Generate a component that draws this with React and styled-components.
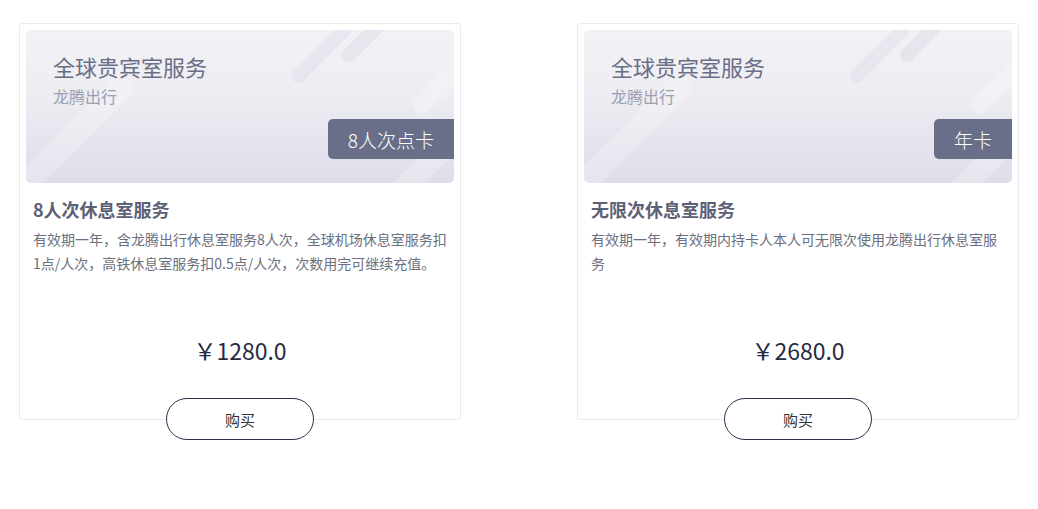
import styled, { createGlobalStyle } from "styled-components";

const GlobalStyle = createGlobalStyle`
  body {
    margin: 0;
    background: #fff;
    font-family: "Noto Sans CJK SC", "Noto Sans", "Liberation Sans", sans-serif;
  }
`

const Page = styled.div`
  display: flex;
  gap: 116px;
  padding: 23px 19px 0;
`

const Column = styled.div`
  display: flex;
  flex-direction: column;
  align-items: center;
  width: 442px;
`

const Card = styled.div`
  box-sizing: border-box;
  width: 100%;
  height: 397px;
  border: 1px solid #ebebef;
  border-radius: 3px;
  padding: 6px 6px 0;
`

const Banner = styled.div`
  position: relative;
  overflow: hidden;
  height: 153px;
  border-radius: 5px;
  background: linear-gradient(180deg, #f2f2f6 0%, #ececf2 45%, #dedde9 100%);
  display: flex;
  flex-direction: column;
  padding: 21px 0 0 27px;
  box-sizing: border-box;
`

const Deco = styled.svg`
  position: absolute;
  inset: 0;
  width: 100%;
  height: 100%;
  pointer-events: none;
`

const BannerTitle = styled.div`
  position: relative;
  font-size: 22px;
  line-height: 30px;
  color: #6a6e86;
`

const BannerSub = styled.div`
  position: relative;
  margin-top: 4px;
  font-size: 16px;
  line-height: 22px;
  color: #9d9eb1;
`

const Tag = styled.div`
  position: absolute;
  right: 0;
  top: 89px;
  height: 40px;
  padding: 0 20px;
  display: flex;
  align-items: center;
  background: #696f88;
  color: #fff;
  font-size: 19px;
  font-weight: 300;
  border-radius: 5px 0 0 5px;
`

const Body = styled.div`
  padding: 0 7px;
`

const Title = styled.div`
  margin-top: 13px;
  font-size: 18px;
  line-height: 26px;
  font-weight: 700;
  color: #5d6176;
`

const Desc = styled.div`
  margin-top: 5px;
  height: 72px;
  font-size: 14px;
  line-height: 24px;
  color: #6c6f7d;
`

const Price = styled.div`
  margin-top: 36px;
  text-align: center;
  font-size: 23px;
  line-height: 30px;
  color: #272c41;
`

const BuyButton = styled.button`
  margin-top: -22px;
  width: 148px;
  height: 42px;
  border: 1px solid #2e3249;
  border-radius: 21px;
  background: #fff;
  color: #333;
  font-family: inherit;
  font-size: 15px;
  cursor: pointer;
`

const Decoration = () => (
  <Deco viewBox="0 0 427 153" preserveAspectRatio="none">
    <line x1="-15" y1="168" x2="95" y2="58" stroke="#ffffff" strokeOpacity="0.22" strokeWidth="24" strokeLinecap="round" />
    <line x1="272" y1="46" x2="318" y2="0" stroke="#dcdce8" strokeOpacity="0.45" strokeWidth="14" strokeLinecap="round" />
    <line x1="322" y1="25" x2="352" y2="-5" stroke="#dcdce8" strokeOpacity="0.55" strokeWidth="14" strokeLinecap="round" />
    <line x1="370" y1="165" x2="445" y2="90" stroke="#ffffff" strokeOpacity="0.25" strokeWidth="22" strokeLinecap="round" />
    <line x1="395" y1="75" x2="440" y2="30" stroke="#ffffff" strokeOpacity="0.25" strokeWidth="18" strokeLinecap="round" />
  </Deco>
)

const cards = [
  {
    tag: "8人次点卡",
    title: "8人次休息室服务",
    desc: "有效期一年，含龙腾出行休息室服务8人次，全球机场休息室服务扣1点/人次，高铁休息室服务扣0.5点/人次，次数用完可继续充值。",
    price: "￥1280.0",
  },
  {
    tag: "年卡",
    title: "无限次休息室服务",
    desc: "有效期一年，有效期内持卡人本人可无限次使用龙腾出行休息室服务",
    price: "￥2680.0",
  },
]

const App = () => {
  return (
    <>
      <GlobalStyle />
      <Page>
        {cards.map((c) => (
          <Column key={c.tag}>
            <Card>
              <Banner>
                <Decoration />
                <BannerTitle>全球贵宾室服务</BannerTitle>
                <BannerSub>龙腾出行</BannerSub>
                <Tag>{c.tag}</Tag>
              </Banner>
              <Body>
                <Title>{c.title}</Title>
                <Desc>{c.desc}</Desc>
                <Price>{c.price}</Price>
              </Body>
            </Card>
            <BuyButton>购买</BuyButton>
          </Column>
        ))}
      </Page>
    </>
  )
}

export default App
